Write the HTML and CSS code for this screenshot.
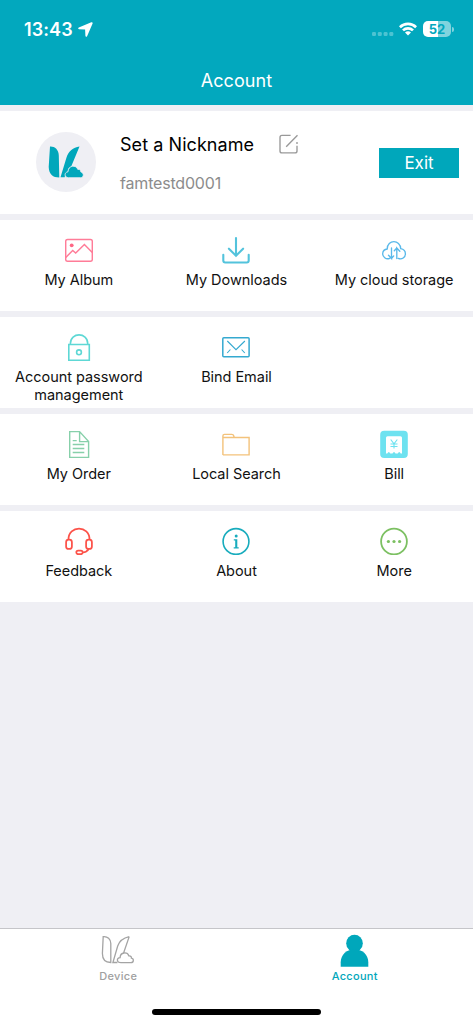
FILE: index.html
```html
<!DOCTYPE html>
<html lang="en">
<head>
<meta charset="utf-8">
<title>Account</title>
<link rel="stylesheet" href="styles.css">
</head>
<body>
<div class="screen">
  <header class="header">
    <div class="status">
      <span class="time">13:43</span>
      <svg class="location" width="15" height="15" viewBox="0 0 15 15"><path d="M13.3.3.8 5.400C-.2 5.900-.1 7.100 1 7.200l6.100.4.3 6.200c.1 1.300 1.300 1.400 1.800.2L14.600 1.500C14.900.6 14.200-.1 13.300.3Z" fill="#fff"/></svg>
      <svg class="signal" width="22" height="4" viewBox="0 0 22 4"><g fill="#4dc3d2"><rect width="4" height="4" rx="1.200"/><rect x="5.800" width="4" height="4" rx="1.200"/><rect x="11.600" width="4" height="4" rx="1.200"/><rect x="17.300" width="4" height="4" rx="1.200"/></g></svg>
      <svg class="wifi" width="18" height="14" viewBox="0 0 18 14"><g fill="none" stroke="#fff" stroke-width="2.700"><path d="M.9 5.200a11.600 11.600 0 0 1 16.200 0"/><path d="M4 8.400a7.200 7.200 0 0 1 10 0"/></g><path d="M9 13.600 6 10.600a4.300 4.300 0 0 1 6 0Z" fill="#fff"/></svg>
      <div class="battery"><span>5</span><span>2</span></div>
      <span class="cap"></span>
    </div>
    <h1 class="title">Account</h1>
  </header>

  <section class="profile">
    <div class="avatar">
      <svg width="36" height="33" viewBox="0 0 36 33"><g fill="#00a7bb"><path d="M2 .5C6.500.2 10.800 3.500 10.800 9.500L11.300 31.500C5 31.500.9 28.500.7 21Z"/><path d="M31.500.4C25 1.500 20.500 5 18.500 11.500L12.500 31.300h4.200c.2-2.700 1.300-4.300 3-4.900.1-3.700 1.400-5.200 3.500-5.900Z"/><path d="M20.600 31.700c-4.600 0-4.600-5.500-.6-5.900.1-6.600 8.200-7.300 9.800-2.400 2.200-.3 3.100 1.100 3 2.500 3.500.8 3.300 5.800-.4 5.800Z" stroke="#efeff4" stroke-width=".8"/></g></svg>
    </div>
    <div class="who">
      <div class="nick"><span>Set a Nickname</span>
        <svg class="edit" width="20" height="20" viewBox="0 0 20 20" fill="none" stroke="#999" stroke-width="1.350"><path d="M11.600 1.400H3Q1 1.400 1 3.400v13.500q0 2 2 2h13q2 0 2-2v-5.200M18 8v2M7.200 12.700 18.500 1.200"/></svg>
      </div>
      <div class="user">famtestd0001</div>
    </div>
    <button class="exit">Exit</button>
  </section>

  <section class="row">
    <div class="item">
      <svg class="ico" viewBox="0 0 28 28" fill="none" stroke="#ff7c98" stroke-width="1.450"><rect x=".7" y="3.500" width="26.600" height="21.700" rx="1.800"/><path d="m.8 21.400 6.900-7 3 2.700 8.700-8.600 7.900 7.900"/><circle cx="6.700" cy="9.300" r="1.900" fill="#ff6685" stroke="none"/></svg>
      <span>My Album</span>
    </div>
    <div class="item">
      <svg class="ico" viewBox="0 0 28 28" fill="none" stroke="#53c3dc" stroke-width="2.100" stroke-linecap="round"><path d="M14 2v17.500M6.900 12.700l7.100 7 7.100-7M1.300 18.800v5.700q0 2 2 2h21.400q2 0 2-2v-5.700"/></svg>
      <span>My Downloads</span>
    </div>
    <div class="item">
      <svg class="ico" viewBox="0 0 28 28" fill="none" stroke="#5ab9ea" stroke-width="1.350" stroke-linecap="round"><path d="M9.700 22.300C6 24 2.500 20.800 2.700 17.500c.2-2.600 2-4.200 4.500-4.500C7.200 3.300 20.400 3.300 20.700 12.700c3.200.5 4.700 2.700 4.700 5.200 0 3.300-3.500 6.200-7.100 4.500M11.500 12v10.500l-3-3.300M11.500 22.500l2.200-2.600M16.800 22.500V12l3 3.200M16.800 12l-2.500 2.700"/></svg>
      <span>My cloud storage</span>
    </div>
  </section>

  <section class="row">
    <div class="item">
      <svg class="ico" viewBox="0 0 28 28" fill="none" stroke="#5ed8d5" stroke-width="1.600"><path d="M3.800 11.500h20.500v15.800H3.800ZM5.400 11.500v-1c0-11.500 17.300-11.500 17.300 0v1"/><circle cx="14" cy="19.300" r="2.400" stroke-width="1.600"/></svg>
      <span>Account password<br>management</span>
    </div>
    <div class="item">
      <svg class="ico" viewBox="0 0 28 28" fill="none" stroke="#35a9d0" stroke-width="1.500"><rect x=".8" y="4.700" width="26.300" height="19" rx="1"/><path stroke-width="1.100" d="m5.300 8 8.700 8.700L22.900 8M5.200 20l3.200-3.500M22.800 20l-3.200-3.500"/></svg>
      <span>Bind Email</span>
    </div>
  </section>

  <section class="row">
    <div class="item">
      <svg class="ico" viewBox="0 0 28 28" fill="none" stroke="#87d0aa" stroke-width="1.400"><path d="M4.700 1.600h9.900l9 10v15.900H4.700ZM14.600 1.600v10h9"/><path d="M7.700 10.600h4M7.700 14.500h11.600M7.700 18.500h11.600M7.700 22.500h11.600"/></svg>
      <span>My Order</span>
    </div>
    <div class="item">
      <svg class="ico" viewBox="0 0 28 28" fill="none" stroke="#f3c27b" stroke-width="1.400"><path d="M.9 24.900V6q0-1.600 1.600-1.600h7.300q1.600 0 2 1.600l.4 1.500h14.900v17.400H.9M.9 7.500h11.300"/></svg>
      <span>Local Search</span>
    </div>
    <div class="item">
      <svg class="ico" viewBox="0 0 28 28"><rect x=".2" y=".8" width="27.600" height="27.200" rx="4" fill="#6de2f0"/><path d="M7.500 6.200h13q1.500 0 1.500 1.500v15.700h-1.300q-1.500-3-3 0h-2.200q-1.500-3-3 0h-2.200q-1.500-3-3 0H6V7.700q0-1.500 1.500-1.500Z" fill="#fff"/><path d="m10.700 9.500 3.300 4.300 3.300-4.300M10.500 14h7M10.500 16.500h7M14 14v4.500" fill="none" stroke="#6de2f0" stroke-width="1.100"/></svg>
      <span>Bill</span>
    </div>
  </section>

  <section class="row">
    <div class="item">
      <svg class="ico" viewBox="0 0 28 28" fill="none" stroke="#fc5249" stroke-width="1.750"><path d="M3.400 12.800C3.500-2 24.500-2 24.600 12.800M23.800 22c-1.300 2-3.500 3.300-6 3.500"/><rect x="1.100" y="12.700" width="5.800" height="9.200" rx="2.500"/><rect x="21.100" y="12.700" width="5.800" height="9.200" rx="2.500"/><rect x="11.300" y="23.500" width="6.400" height="3.700" rx="1.850"/></svg>
      <span>Feedback</span>
    </div>
    <div class="item">
      <svg class="ico" viewBox="0 0 28 28"><circle cx="14" cy="14.500" r="12.900" fill="none" stroke="#18acbd" stroke-width="1.600"/><circle cx="14.200" cy="9.100" r="1.500" fill="#18acbd"/><path d="M11.800 12.300h3.500v8h1.400v1.200h-5v-1.200h1.500v-6.800h-1.400Z" fill="#18acbd"/></svg>
      <span>About</span>
    </div>
    <div class="item">
      <svg class="ico" viewBox="0 0 28 28"><circle cx="14" cy="14.500" r="12.900" fill="none" stroke="#7cc062" stroke-width="1.800"/><g fill="#7cc062"><circle cx="8.400" cy="14.500" r="1.600"/><circle cx="14" cy="14.500" r="1.600"/><circle cx="19.600" cy="14.500" r="1.600"/></g></svg>
      <span>More</span>
    </div>
  </section>

  <nav class="tabs">
    <div class="tab">
      <svg width="34" height="34" viewBox="0 0 34 34" fill="none" stroke="#a4a4a4" stroke-width="1.300"><path d="M2.200 3.600C6.500 3.100 9.800 6.200 9.800 10.500V29.500C4.800 29.500 1.400 26.500 1.400 20.500Z"/><path d="M28.200 3.600C22 5 18.500 7.500 16.700 13L11.900 29.500h4.500M28.200 3.600 22.600 20"/><path d="M20 29.700c-4.600 0-4.700-4.800-.9-5.100.1-5.700 7.500-6 8.700-1.700 2.200-.2 2.700 1 2.600 2.300 2.800.6 2.500 4.500-.5 4.500Z"/></svg>
      <span>Device</span>
    </div>
    <div class="tab active">
      <svg width="34" height="34" viewBox="0 0 34 34" fill="#00a7bb"><ellipse cx="16.500" cy="10.300" rx="8.300" ry="8.500"/><path d="M2.700 33.800v-4.600C2.700 21.300 9 16.200 16.500 16.200s13.800 5.100 13.800 13v4.600Z"/></svg>
      <span>Account</span>
    </div>
    <div class="home"></div>
  </nav>
</div>
</body>
</html>
```
FILE: styles.css
```css
* { box-sizing: border-box; }
body { margin: 0; background: #efeff4; color: #111; font-family: Inter, "Liberation Sans", sans-serif; }
.screen { width: 473px; height: 1024px; display: flex; flex-direction: column; gap: 6px; }
.header { height: 105px; background: #02a8be; color: #fff; flex: none; }
.status { height: 56px; display: flex; align-items: center; padding: 2px 19px 0 24px; }
.time { font-size: 18px; font-weight: 600; width: 50px; letter-spacing: .1px; }
.location { margin-left: 4px; }
.signal { margin: 9px 5px 0 auto; }
.wifi { margin-right: 6px; }
.battery { width: 28px; height: 16px; border-radius: 5px; display: flex; justify-content: center; background: linear-gradient(90deg, #fff 52%, #80d3de 52%); font-size: 13px; line-height: 16px; font-weight: 700; color: #02a8be; }
.cap { width: 2px; height: 5px; margin-left: 1px; border-radius: 0 3px 3px 0; background: #80d3de; }
.title { margin: 0; font-size: 18px; line-height: 24px; padding-top: 13px; font-weight: 400; text-align: center; letter-spacing: .1px; }
.profile { height: 103px; background: #fff; display: flex; align-items: center; padding: 0 14px 0 36px; flex: none; }
.avatar { width: 60px; height: 60px; margin-bottom: 1px; border-radius: 50%; background: #efeff4; display: flex; align-items: center; justify-content: center; }
.who { margin: 0 auto 0 24px; padding-top: 1px; }
.nick { display: flex; align-items: center; gap: 25px; height: 24px; font-size: 18px; letter-spacing: .06px; color: #000; }
.edit { margin-bottom: 2px; }
.user { margin-top: 15px; height: 22px; line-height: 22px; font-size: 16px; letter-spacing: -.18px; color: #8c8c8c; }
.exit { width: 80px; height: 30px; border: 0; padding: 0; background: #00a7bb; color: #fff; font: 400 17px Inter, "Liberation Sans", sans-serif; letter-spacing: 0; }
.row { height: 91px; background: #fff; display: grid; grid-template-columns: repeat(3, 1fr); padding-top: 16px; flex: none; }
.item { display: flex; flex-direction: column; align-items: center; text-align: center; font-size: 14.5px; line-height: 18px; letter-spacing: -.04px; white-space: nowrap; }
.ico { width: 28px; height: 28px; margin-bottom: 7px; flex: none; }
.tabs { height: 96px; margin-top: auto; background: #fff; border-top: 1px solid #c5c5c9; display: grid; grid-template-columns: 1fr 1fr; grid-template-rows: 1fr auto; flex: none; }
.tab { display: flex; flex-direction: column; align-items: center; padding-top: 4px; color: #a0a0a0; font-size: 11px; line-height: 14px; font-weight: 500; letter-spacing: .3px; }
.tab span { margin-top: 2px; }
.active { color: #00a7bb; }
.home { grid-column: 1 / 3; justify-self: center; width: 169px; height: 6px; border-radius: 3px; background: #000; margin-bottom: 9px; }
```
